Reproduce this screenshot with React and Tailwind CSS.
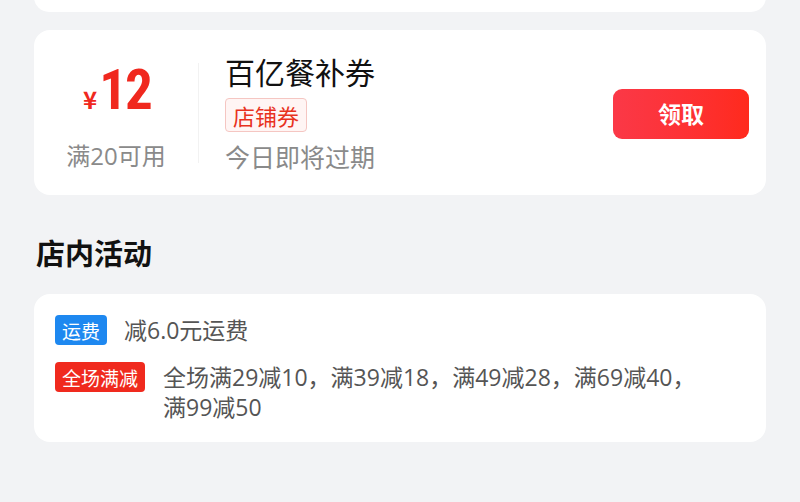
export default function App() {
  const font = { fontFamily: '"Noto Sans CJK SC", "Noto Sans", sans-serif' };
  const mixed = { fontFamily: '"Open Sans", "Noto Sans CJK SC", sans-serif' };
  return (
    <div className="w-[800px] h-[502px] overflow-hidden bg-[#f2f3f5]" style={font}>
      {/* previous card bottom */}
      <div className="mx-[34px] h-[30px] -mt-[18px] bg-white rounded-[16px]" />

      {/* coupon */}
      <div className="mx-[34px] mt-[18px] h-[165px] bg-white rounded-[16px] flex items-center">
        <div className="w-[164px] flex flex-col items-center pt-[6px]">
          <div className="flex items-baseline text-[#f0281e] font-bold leading-none pl-[2px]">
            <span className="text-[24px] mr-[2px]">¥</span>
            <span className="text-[55px] tracking-[-2px]" style={{ fontFamily: '"Liberation Sans Narrow", "Roboto Condensed", "Noto Sans", sans-serif' }}>12</span>
          </div>
          <div className="mt-[26px] text-[24px] leading-none text-[#8a8a8a]" style={mixed}>满20可用</div>
        </div>
        <div className="h-[100px] border-l border-[#f2f2f2]" />
        <div className="flex-1 pl-[26px] flex flex-col items-start">
          <div className="text-[30px] leading-none text-[#111]">百亿餐补券</div>
          <div className="mt-[12px] h-[34px] px-[7px] flex items-center border border-[#f5c6c2] bg-[#fff5f4] rounded-[4px] text-[22px] text-[#e8321e] leading-none">
            店铺券
          </div>
          <div className="mt-[12px] text-[25px] leading-none text-[#8a8a8a]">今日即将过期</div>
        </div>
        <button className="mr-[17px] mt-[2px] w-[136px] h-[50px] rounded-[9px] bg-gradient-to-r from-[#fb3847] to-[#ff2a1c] text-white font-bold text-[23px]">
          领取
        </button>
      </div>

      {/* section title */}
      <div className="mt-[43px] ml-[36px] text-[29px] font-bold leading-none text-[#111]">店内活动</div>

      {/* activities */}
      <div className="mx-[34px] mt-[27px] bg-white rounded-[16px] px-[21px] pt-[21px] pb-[20px] flex flex-col gap-[17px]">
        <div className="flex items-start">
          <span className="shrink-0 h-[30px] px-[7px] flex items-center bg-[#1e88f0] text-white text-[19px] rounded-[4px] leading-none">运费</span>
          <span className="ml-[17px] text-[23px] leading-[30px] text-[#555]" style={mixed}>减6.0元运费</span>
        </div>
        <div className="flex items-start">
          <span className="shrink-0 h-[30px] px-[7px] flex items-center bg-[#f02a1e] text-white text-[19px] rounded-[4px] leading-none">全场满减</span>
          <span className="ml-[18px] text-[23px] leading-[30px] text-[#555]" style={mixed}>
            全场满29减10，满39减18，满49减28，满69减40，
            <br />
            满99减50
          </span>
        </div>
      </div>
    </div>
  );
}
